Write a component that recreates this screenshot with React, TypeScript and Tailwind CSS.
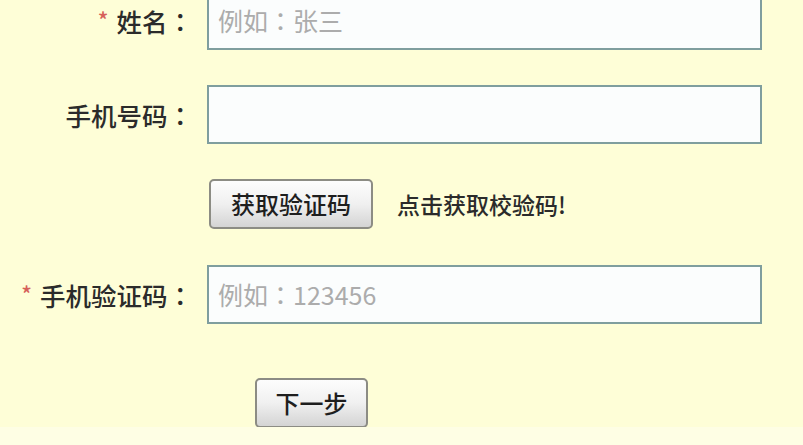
import React from "react";

const font = { fontFamily: '"Noto Sans CJK SC", "Noto Sans", sans-serif' };
const jp = { fontFamily: '"Noto Sans CJK JP", "Noto Sans CJK SC", sans-serif' };

function Colon() {
  return <span style={jp}>：</span>;
}

function Label({ text, required }: { text: string; required?: boolean }) {
  return (
    <div className="w-[193px] shrink-0 flex items-center justify-end text-[25.5px] text-[#2b2b2b] font-medium leading-none">
      {required && <span className="text-[#d6615a] text-[22px] mr-[8px] mt-[-4px]">*</span>}
      <span>{text}</span>
      <Colon />
    </div>
  );
}

function Field({ children }: { children?: React.ReactNode }) {
  return (
    <div className="ml-[14px] w-[555px] h-[59px] border-2 border-[#7f9e9e] bg-[#fbfdfd] flex items-center pl-[9px] text-[25px] text-[#acacac] leading-none">
      {children}
    </div>
  );
}

function Btn({ text, w }: { text: string; w: string }) {
  return (
    <button
      className={`${w} h-[50px] rounded-[5px] border-2 border-[#8c8c84] bg-gradient-to-b from-[#fdfdfd] via-[#f0f0f0] to-[#d4d4d4] text-[24px] text-[#1e1e1e] font-medium leading-none flex items-center justify-center`}
      style={font}
    >
      {text}
    </button>
  );
}

export default function App() {
  return (
    <div className="w-[803px] h-[445px] bg-[#fefed7] overflow-hidden relative" style={font}>
      <div className="flex flex-col">
        <div className="flex items-center mt-[-9px]">
          <Label text="姓名" required />
          <Field>
            例如<Colon />张三
          </Field>
        </div>
        <div className="flex items-center mt-[35px]">
          <Label text="手机号码" />
          <Field />
        </div>
        <div className="flex items-center mt-[35px] pl-[209px]">
          <Btn text="获取验证码" w="w-[164px]" />
          <span className="ml-[24px] text-[23px] text-[#2b2b2b] font-medium leading-none">点击获取校验码!</span>
        </div>
        <div className="flex items-center mt-[36px]">
          <Label text="手机验证码" required />
          <Field>
            例如<Colon />123456
          </Field>
        </div>
        <div className="flex items-center mt-[54px] pl-[255px]">
          <Btn text="下一步" w="w-[113px]" />
        </div>
      </div>
      <div className="absolute left-0 right-0 bottom-0 h-[18px] bg-[#fefee4]" />
    </div>
  );
}
